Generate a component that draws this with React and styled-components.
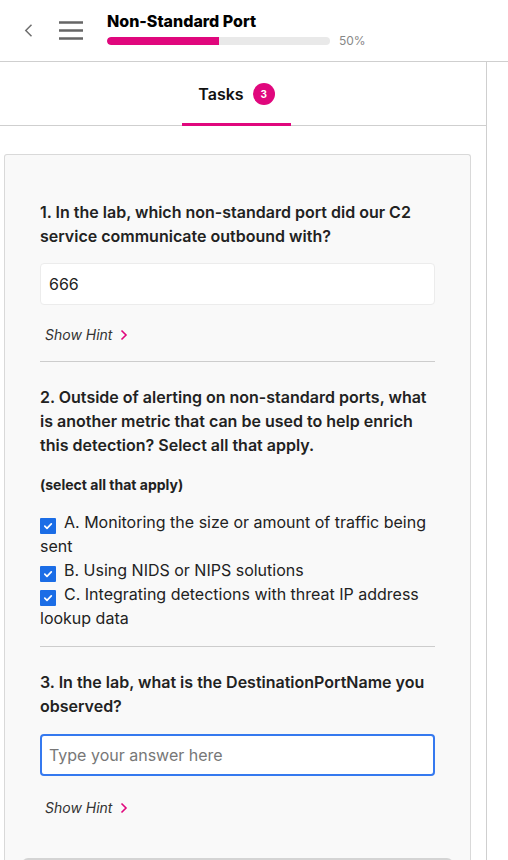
import React from "react";
import styled, { createGlobalStyle } from "styled-components";

const Global = createGlobalStyle`
  html, body { margin: 0; padding: 0; background: #fff; }
  body { font-family: Inter, "Noto Sans", sans-serif; color: #222; overflow: hidden; }
  * { box-sizing: border-box; }
`;

const Header = styled.header`
  height: 62px;
  border-bottom: 1px solid #cfcfcf;
  display: flex;
  align-items: center;
  padding-left: 24px;
`;

const IconButton = styled.div`
  display: flex;
  align-items: center;
  justify-content: center;
  width: ${(p) => p.$w}px;
  margin-right: ${(p) => p.$mr}px;
  height: 24px;
`;

const TitleBlock = styled.div`
  display: flex;
  flex-direction: column;
  margin-top: -2px;
`;

const Title = styled.h1`
  margin: 0;
  font-size: 16px;
  line-height: 20px;
  font-weight: 800;
  color: #000;
  letter-spacing: 0;
`;

const ProgressRow = styled.div`
  display: flex;
  align-items: center;
  gap: 9px;
  margin-top: 2px;
`;

const Track = styled.div`
  width: 223px;
  height: 8px;
  border-radius: 4px;
  background: #e9e9e9;
  overflow: hidden;
`;

const Fill = styled.div`
  height: 100%;
  background: #e0077d;
  border-radius: 4px 0 0 4px;
`;

const Percent = styled.span`
  font-size: 12px;
  color: #888;
  line-height: 16px;
`;

const Main = styled.div`
  display: flex;
`;

const Panel = styled.section`
  width: 487px;
  border-right: 1px solid #cfcfcf;
  min-height: calc(100vh - 62px);
`;

const TabBar = styled.nav`
  height: 64px;
  border-bottom: 1px solid #cfcfcf;
  display: flex;
  justify-content: center;
  padding-right: 13px;
`;

const Tab = styled.div`
  display: flex;
  align-items: center;
  gap: 9px;
  padding: 0 16px;
  border-bottom: 3px solid ${(p) => (p.$active ? "#e0077d" : "transparent")};
  margin-bottom: -1px;
  padding-top: 2px;
`;

const TabLabel = styled.span`
  font-size: 16px;
  font-weight: 600;
  color: #111;
`;

const Badge = styled.span`
  width: 22px;
  height: 22px;
  border-radius: 50%;
  background: #e0077d;
  color: #fff;
  font-size: 10px;
  font-weight: 700;
  display: flex;
  align-items: center;
  justify-content: center;
`;

const Card = styled.div`
  margin: 28px 0 0 4px;
  width: 467px;
  background: #f9f9f9;
  border: 1px solid #d9d9d9;
  border-bottom: none;
  border-radius: 3px 3px 0 0;
  padding: 45px 35px 0 35px;
  min-height: 720px;
`;

const Question = styled.div`
  padding-bottom: ${(p) => p.$pb || 0}px;
  border-bottom: ${(p) => (p.$divider ? "1px solid #cdcdcd" : "none")};
  margin-bottom: ${(p) => (p.$divider ? 23 : 0)}px;
`;

const QText = styled.p`
  margin: 0;
  font-size: 16px;
  line-height: 24px;
  font-weight: 600;
  color: #222;
`;

const AnswerInput = styled.input`
  display: block;
  width: 100%;
  height: 42px;
  margin-top: ${(p) => (p.$focused ? 16 : 15)}px;
  border: ${(p) => (p.$focused ? "2px solid #3579ef" : "1px solid #ececec")};
  border-radius: 4px;
  background: #fff;
  font-family: Inter, "Noto Sans", sans-serif;
  font-size: 16px;
  color: #222;
  padding: 0 ${(p) => (p.$focused ? 7 : 8)}px;
  outline: none;
  &::placeholder { color: #777; }
`;

const Hint = styled.div`
  display: flex;
  align-items: center;
  gap: 8px;
  margin-top: ${(p) => p.$mt || 20}px;
  padding-left: 5px;
  font-size: 14px;
  line-height: 20px;
  font-style: italic;
  color: #333;
`;

const SelectNote = styled.p`
  margin: 18px 0 0 0;
  font-size: 14px;
  line-height: 20px;
  font-weight: 700;
  color: #222;
`;

const Options = styled.div`
  margin-top: 15px;
`;

const Option = styled.div`
  font-size: 16px;
  line-height: 24px;
  color: #222;
`;

const Check = styled.span`
  display: inline-block;
  width: 16px;
  height: 16px;
  line-height: 0;
  background: #1b6de6;
  border-radius: 1px;
  vertical-align: -6px;
  margin-right: 8px;
  svg { margin: 3px; }
`;

const NextButton = styled.div`
  margin: 40px -18px 0 -18px;
  height: 12px;
  background: #d4d4d4;
  border-radius: 6px 6px 0 0;
`;

const Chevron = ({ color = "#e0077d" }) => (
  <svg width="8" height="12" viewBox="0 0 8 12" fill="none">
    <path d="M1.5 1.5 L6 6 L1.5 10.5" stroke={color} strokeWidth="1.6" />
  </svg>
);

const CheckMark = () => (
  <svg width="10" height="10" viewBox="0 0 10 10" fill="none">
    <path d="M1.8 5.2 L4 7.3 L8.3 2.8" stroke="#fff" strokeWidth="1.7" strokeLinecap="round" strokeLinejoin="round" />
  </svg>
);

const options = [
  "A. Monitoring the size or amount of traffic being sent",
  "B. Using NIDS or NIPS solutions",
  "C. Integrating detections with threat IP address lookup data",
];

export default function App() {
  return (
    <>
      <Global />
      <Header>
        <IconButton $w={9} $mr={26}>
          <svg width="9" height="13" viewBox="0 0 9 13" fill="none">
            <path d="M7.5 0.8 L1.8 6.5 L7.5 12.2" stroke="#6f6f6f" strokeWidth="1.5" />
          </svg>
        </IconButton>
        <IconButton $w={24} $mr={24}>
          <svg width="24" height="20" viewBox="0 0 24 20" fill="none">
            <path d="M0 1.5 H24 M0 9.5 H24 M0 17.5 H24" stroke="#666" strokeWidth="2.4" />
          </svg>
        </IconButton>
        <TitleBlock>
          <Title>Non-Standard Port</Title>
          <ProgressRow>
            <Track>
              <Fill style={{ width: "50%" }} />
            </Track>
            <Percent>50%</Percent>
          </ProgressRow>
        </TitleBlock>
      </Header>
      <Main>
        <Panel>
          <TabBar>
            <Tab $active>
              <TabLabel>Tasks</TabLabel>
              <Badge>3</Badge>
            </Tab>
          </TabBar>
          <Card>
            <Question $divider $pb={16}>
              <QText>1. In the lab, which non-standard port did our C2 service communicate outbound with?</QText>
              <AnswerInput defaultValue="666" />
              <Hint>
                Show Hint <Chevron />
              </Hint>
            </Question>
            <Question $divider $pb={16}>
              <QText>2. Outside of alerting on non-standard ports, what is another metric that can be used to help enrich this detection? Select all that apply.</QText>
              <SelectNote>(select all that apply)</SelectNote>
              <Options>
                {options.map((o) => (
                  <Option key={o}>
                    <Check>
                      <CheckMark />
                    </Check>
                    {o}
                  </Option>
                ))}
              </Options>
            </Question>
            <Question>
              <QText>3. In the lab, what is the DestinationPortName you observed?</QText>
              <AnswerInput $focused placeholder="Type your answer here" autoFocus />
              <Hint $mt={22}>
                Show Hint <Chevron />
              </Hint>
            </Question>
            <NextButton />
          </Card>
        </Panel>
      </Main>
    </>
  );
}
